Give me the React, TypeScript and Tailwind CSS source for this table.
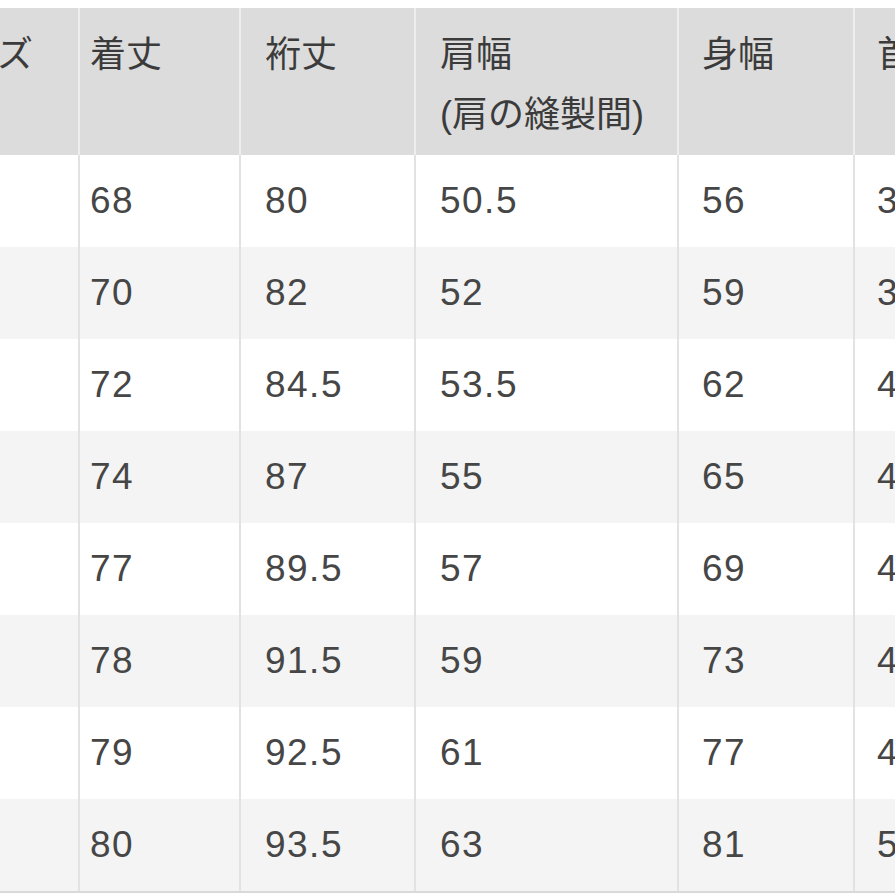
import React from 'react';

type Row = { size: string; values: string[] };

const headers: React.ReactNode[] = [
  'サイズ',
  '着丈',
  '裄丈',
  <>
    肩幅
    <br />
    (肩の縫製間)
  </>,
  '身幅',
  '首回り',
];

const rows: Row[] = [
  { size: 'XS', values: ['68', '80', '50.5', '56', '37'] },
  { size: 'S', values: ['70', '82', '52', '59', '38'] },
  { size: 'M', values: ['72', '84.5', '53.5', '62', '40'] },
  { size: 'L', values: ['74', '87', '55', '65', '42'] },
  { size: 'XL', values: ['77', '89.5', '57', '69', '44'] },
  { size: 'XXL', values: ['78', '91.5', '59', '73', '46'] },
  { size: '3XL', values: ['79', '92.5', '61', '77', '48'] },
  { size: '4XL', values: ['80', '93.5', '63', '81', '50'] },
];

// column widths incl. the 2px right border
const colWidths = ['w-[178px]', 'w-[161px]', 'w-[175px]', 'w-[263px]', 'w-[176px]', 'w-[200px]'];
const padLeft = ['pl-[24px]', 'pl-[10px]', 'pl-[24px]', 'pl-[24px]', 'pl-[23px]', 'pl-[22px]'];

const App: React.FC = () => {
  return (
    <div
      className="w-[895px] h-[895px] overflow-hidden bg-white pt-[8px]"
      style={{ fontFamily: '"Liberation Sans", "Noto Sans CJK JP", sans-serif' }}
    >
      <div className="ml-[-98px] w-[1153px] border-b-2 border-[#d9d9d9]">
        {/* header */}
        <div className="flex h-[147px] bg-[#dcdcdc]">
          {headers.map((h, i) => (
            <div
              key={i}
              className={`${colWidths[i]} ${padLeft[i]} shrink-0 border-r-2 border-[#eeeeee] pt-[17px] text-[36px] leading-[60px] text-[#3b3b3b] whitespace-nowrap`}
            >
              {h}
            </div>
          ))}
        </div>

        {/* body */}
        {rows.map((r, ri) => (
          <div key={r.size} className={`flex h-[92px] ${ri % 2 === 1 ? 'bg-[#f4f4f4]' : 'bg-white'}`}>
            {[r.size, ...r.values].map((v, ci) => (
              <div
                key={ci}
                className={`${colWidths[ci]} ${padLeft[ci]} shrink-0 flex items-center border-r-2 border-[#e2e2e2] text-[37px] tracking-[0.04em] text-[#464646] whitespace-nowrap`}
              >
                {v}
              </div>
            ))}
          </div>
        ))}
      </div>
    </div>
  );
};

export default App;
